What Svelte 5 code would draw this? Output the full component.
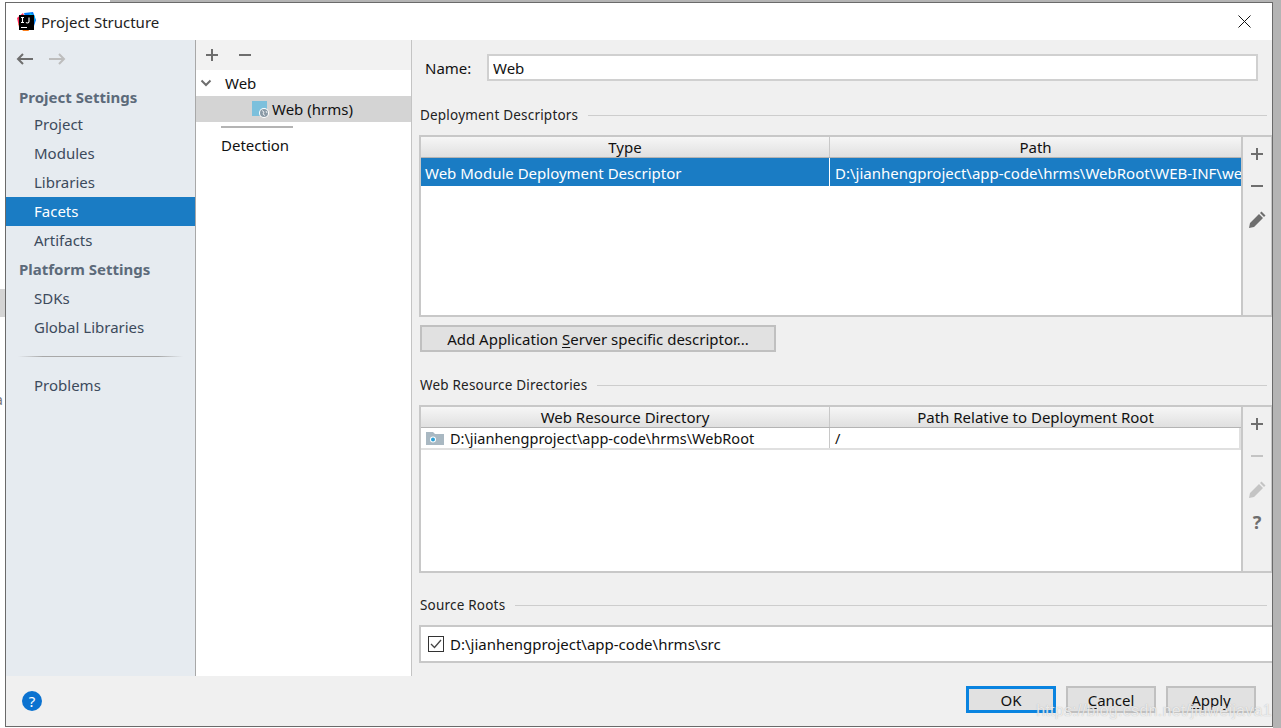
<script lang="ts">
  const settings = ["Project", "Modules", "Libraries", "Facets", "Artifacts"];
  const platform = ["SDKs", "Global Libraries"];
</script>

<div class="page">
  <div class="top-strip"><span class="strip-white"></span><span class="strip-gray"></span></div>
  <div class="middle">
    <div class="left-strip"><span class="peek"></span><span class="peek-char">a</span></div>
    <div class="window">
      <header class="titlebar">
        <svg class="logo" width="20" height="20" viewBox="0 0 20 20">
          <path d="M1 6 7 1 9 6 3 15Z" fill="#fe2857" />
          <path d="M8 1 17 0 20 8 17 17 11 12Z" fill="#087cfa" />
          <path d="M2 12 7 19 13 19 8 9Z" fill="#fc801d" />
          <path d="M14 1 19 4 18 11 12 6Z" fill="#07c3f2" />
          <rect x="3" y="3" width="15" height="15" fill="#000" />
          <rect x="5" y="15" width="6" height="1" fill="#fff" />
          <path d="M5 5.5h3M6.5 5.5v5M5 10.5h3M13 5.500v4c0 1-.8 1.500-1.600 1.500-.6 0-1.100-.3-1.400-.8" stroke="#fff" stroke-width="1.100" fill="none" />
        </svg>
        <span class="title">Project Structure</span>
        <svg class="close" width="13" height="13" viewBox="0 0 13 13">
          <path d="M.5.5l12 12M12.500.5l-12 12" stroke="#111" stroke-width="1" />
        </svg>
      </header>

      <div class="body">
        <aside class="sidebar">
          <div class="history">
            <svg width="18" height="12" viewBox="0 0 18 12"><path d="M17 6H2M7 1 2 6l5 5" stroke="#6e6e6e" stroke-width="2" fill="none" /></svg>
            <svg width="18" height="12" viewBox="0 0 18 12"><path d="M1 6h15M11 1l5 5-5 5" stroke="#bdbdbd" stroke-width="2" fill="none" /></svg>
          </div>
          <div class="group first">Project Settings</div>
          {#each settings as item}
            <div class="item" class:selected={item === "Facets"}>{item}</div>
          {/each}
          <div class="group">Platform Settings</div>
          {#each platform as item}
            <div class="item">{item}</div>
          {/each}
          <div class="side-sep"></div>
          <div class="item">Problems</div>
        </aside>

        <section class="tree">
          <div class="tree-tools">
            <svg width="14" height="14" viewBox="0 0 14 14"><path d="M7 1v12M1 7h12" stroke="#6e6e6e" stroke-width="2" /></svg>
            <svg width="14" height="14" viewBox="0 0 14 14"><path d="M1 7h12" stroke="#6e6e6e" stroke-width="2" /></svg>
          </div>
          <div class="tree-row">
            <svg class="chevron" width="12" height="8" viewBox="0 0 12 8"><path d="M1.500 1.500 6 6l4.500-4.500" stroke="#6e6e6e" stroke-width="2" fill="none" /></svg>
            <span>Web</span>
          </div>
          <div class="tree-row child">
            <svg width="20" height="20" viewBox="0 0 20 20">
              <rect x="1" y="2" width="15" height="15" fill="#7cc0dc" />
              <circle cx="13" cy="14" r="5" fill="#fff" />
              <circle cx="13" cy="14" r="4" fill="#8a9aa6" />
              <path d="M11 11.500l2 1.500-1 2 2 1.500M15 12l1 2" stroke="#fff" stroke-width=".8" fill="none" />
            </svg>
            <span>Web (hrms)</span>
          </div>
          <div class="tree-sep"></div>
          <div class="detection">Detection</div>
        </section>

        <main class="panel">
          <div class="name-row">
            <label for="name">Name:</label>
            <input id="name" value="Web" />
          </div>

          <div class="legend l-deploy"><span>Deployment Descriptors</span><i></i></div>
          <div class="table-wrap t-deploy">
            <div class="table">
              <div class="thead"><div class="c1">Type</div><div class="c2">Path</div></div>
              <div class="tr sel">
                <div class="c1">Web Module Deployment Descriptor</div>
                <div class="c2 clip">D:\jianhengproject\app-code\hrms\WebRoot\WEB-INF\web.xml</div>
              </div>
            </div>
            <div class="tools">
              <svg width="14" height="14" viewBox="0 0 14 14"><path d="M7 1v12M1 7h12" stroke="#6e6e6e" stroke-width="2" /></svg>
              <svg width="14" height="14" viewBox="0 0 14 14"><path d="M1 7h12" stroke="#6e6e6e" stroke-width="2" /></svg>
              <svg width="18" height="18" viewBox="0 0 18 18"><path d="M1 17l1-5L11 3l4 4-9 9ZM12 2l1.500-1.500 4 4L16 6Z" fill="#6e6e6e" /></svg>
            </div>
          </div>
          <button class="add-btn">Add Application <u>S</u>erver specific descriptor...</button>

          <div class="legend l-web"><span>Web Resource Directories</span><i></i></div>
          <div class="table-wrap t-web">
            <div class="table">
              <div class="thead"><div class="c1">Web Resource Directory</div><div class="c2">Path Relative to Deployment Root</div></div>
              <div class="tr plain">
                <div class="c1 dir">
                  <svg width="18" height="14" viewBox="0 0 18 14">
                    <path d="M0 1h7l2 2h9v11H0Z" fill="#a9b8c2" />
                    <circle cx="7" cy="8.500" r="3" fill="#fff" />
                    <circle cx="7" cy="8.500" r="2" fill="#2a9fd6" />
                  </svg>
                  <span>D:\jianhengproject\app-code\hrms\WebRoot</span>
                </div>
                <div class="c2 slash">/</div>
              </div>
            </div>
            <div class="tools">
              <svg width="14" height="14" viewBox="0 0 14 14"><path d="M7 1v12M1 7h12" stroke="#6e6e6e" stroke-width="2" /></svg>
              <svg width="14" height="14" viewBox="0 0 14 14"><path d="M1 7h12" stroke="#c4c4c4" stroke-width="2" /></svg>
              <svg width="18" height="18" viewBox="0 0 18 18"><path d="M1 17l1-5L11 3l4 4-9 9ZM12 2l1.500-1.500 4 4L16 6Z" fill="#c4c4c4" /></svg>
              <span class="q">?</span>
            </div>
          </div>

          <div class="legend l-src"><span>Source Roots</span><i></i></div>
          <div class="roots">
            <svg width="16" height="16" viewBox="0 0 16 16">
              <rect x=".5" y=".5" width="15" height="15" fill="#fff" stroke="#333" />
              <path d="M3 8l3.500 3.500L13 4" stroke="#444" stroke-width="1.300" fill="none" />
            </svg>
            <span>D:\jianhengproject\app-code\hrms\src</span>
          </div>
        </main>
      </div>

      <footer class="footer">
        <svg class="help" width="20" height="20" viewBox="0 0 20 20">
          <circle cx="10" cy="10" r="10" fill="#0b72d0" />
          <text x="10" y="15.500" text-anchor="middle" font-size="15" fill="#fff" font-family="Noto Sans, sans-serif">?</text>
        </svg>
        <div class="actions">
          <button class="default">OK</button>
          <button><u>C</u>ancel</button>
          <button><u>A</u>pply</button>
        </div>
      </footer>
      <span class="watermark">https://blog.csdn.net/jiuweijava1</span>
    </div>
    <div class="right-strip"></div>
  </div>
</div>

<style>
  :global(body) {
    margin: 0;
    background: #fff;
  }
  .page {
    width: 1281px;
    height: 728px;
    overflow: hidden;
    font-family: "Noto Sans", sans-serif;
    font-size: 15px;
    color: #111;
  }
  .top-strip {
    display: flex;
    height: 2px;
  }
  .strip-white {
    width: 110px;
  }
  .strip-gray {
    flex: 1;
    background: #b4b4b4;
  }
  .middle {
    display: flex;
    height: 726px;
  }
  .left-strip {
    width: 5px;
    display: flex;
    flex-direction: column;
    overflow: hidden;
  }
  .peek {
    margin-top: 287px;
    height: 28px;
    background: #d4d4d4;
  }
  .peek-char {
    margin: 74px 0 0 -5px;
    font-size: 14px;
    line-height: 18px;
    color: #777;
  }
  .right-strip {
    flex: 1;
    background: #b4b4b4;
  }
  .window {
    position: relative;
    width: 1268px;
    height: 725px;
    box-sizing: border-box;
    border: 1px solid #6a6a6a;
    display: flex;
    flex-direction: column;
    background: #f0f0f0;
  }
  .titlebar {
    height: 37px;
    flex: none;
    background: #fff;
    display: flex;
    align-items: center;
    padding: 0 21px 0 10px;
  }
  .logo {
    margin-right: 5px;
  }
  .title {
    flex: 1;
    color: #222;
  }
  .body {
    flex: none;
    height: 636px;
    display: flex;
  }
  .sidebar {
    width: 190px;
    flex: none;
    box-sizing: border-box;
    background: #e6ebf0;
    border-right: 1px solid #a8a8a8;
    color: #3c4a5c;
  }
  .history {
    height: 37px;
    display: flex;
    align-items: center;
    gap: 14px;
    padding-left: 10px;
  }
  .group {
    height: 29px;
    line-height: 29px;
    padding-left: 13px;
    font-weight: 700;
    color: #5c6a7a;
  }
  .group.first {
    height: 20px;
    line-height: 20px;
    margin-top: 10px;
    margin-bottom: 3px;
  }
  .item {
    height: 29px;
    line-height: 29px;
    padding-left: 28px;
  }
  .item.selected {
    background: #1a7cc4;
    color: #fff;
  }
  .side-sep {
    height: 1px;
    margin: 14px 12px 14px 12px;
    background: linear-gradient(90deg, #e6ebf0, #a8a8a8 15%, #a8a8a8 85%, #e6ebf0);
  }
  .tree {
    width: 216px;
    flex: none;
    box-sizing: border-box;
    background: #fff;
    border-right: 1px solid #c4c4c4;
  }
  .tree-tools {
    height: 30px;
    background: #f2f2f2;
    display: flex;
    align-items: center;
    gap: 19px;
    padding: 0 0 0 9px;
  }
  .tree-row {
    height: 26px;
    display: flex;
    align-items: center;
  }
  .chevron {
    margin: 0 13px 0 4px;
  }
  .tree-row.child {
    background: #d4d4d4;
    padding-left: 55px;
    gap: 1px;
  }
  .tree-sep {
    width: 72px;
    height: 2px;
    margin: 4px 0 0 25px;
    background: #b4b4b4;
  }
  .detection {
    margin: 3px 0 0 25px;
    line-height: 28px;
  }
  .panel {
    flex: 1;
    padding-left: 7px;
    background: #f0f0f0;
    min-width: 0;
  }
  .name-row {
    height: 27px;
    margin-top: 14px;
    display: flex;
    align-items: center;
    padding-left: 6px;
  }
  .name-row label {
    width: 62px;
  }
  .name-row input {
    width: 771px;
    height: 27px;
    box-sizing: border-box;
    border: 2px solid #d0d0d0;
    padding: 0 4px;
    font: inherit;
    color: #111;
    background: #fff;
  }
  .legend {
    display: flex;
    align-items: center;
    gap: 10px;
    height: 20px;
    font-size: 13.500px;
    letter-spacing: 0.2px;
    padding-left: 1px;
    color: #222;
  }
  .legend i {
    flex: 1;
    height: 1px;
    background: #cdcdcd;
    margin-right: 5px;
  }
  .l-deploy {
    margin-top: 24px;
  }
  .l-web {
    margin-top: 23px;
  }
  .l-src {
    margin-top: 22px;
  }
  .table-wrap {
    display: flex;
    width: 853px;
    box-sizing: border-box;
    border: 2px solid #c8c8c8;
    border-right-width: 1px;
  }
  .t-deploy {
    margin-top: 10px;
    height: 182px;
  }
  .t-web {
    margin-top: 10px;
    height: 168px;
  }
  .table {
    width: 820px;
    flex: none;
    background: #fff;
    overflow: hidden;
  }
  .thead {
    height: 20px;
    display: flex;
    background: linear-gradient(#f6f6f6, #e0e0e0);
    border-bottom: 1px solid #b4b4b4;
    text-align: center;
    line-height: 21px;
    color: #111;
  }
  .c1 {
    width: 409px;
    flex: none;
    box-sizing: border-box;
    border-right: 1px solid #c8c8c8;
  }
  .c2 {
    flex: 1;
    min-width: 0;
  }
  .tr {
    display: flex;
  }
  .tr.sel {
    height: 28px;
    line-height: 30px;
    background: #1a7cc4;
    color: #fff;
  }
  .tr.sel .c1 {
    padding-left: 4px;
    border-right-color: #fff;
  }
  .clip {
    padding-left: 5px;
    white-space: nowrap;
    overflow: hidden;
  }
  .tr.plain {
    height: 20px;
    line-height: 20px;
    border-bottom: 2px solid #e0e0e0;
    border-right: 2px solid #e0e0e0;
    font-size: 14.500px;
  }
  .dir {
    display: flex;
    align-items: center;
    gap: 6px;
    padding-left: 5px;
  }
  .slash {
    padding-left: 5px;
  }
  .tools {
    flex: 1;
    border-left: 2px solid #c8c8c8;
    background: #f0f0f0;
    display: flex;
    flex-direction: column;
    align-items: center;
    gap: 18px;
    padding-top: 10px;
  }
  .tools .q {
    margin-top: -6px;
    font-size: 18px;
    font-weight: 700;
    line-height: 22px;
    color: #6e6e6e;
  }
  button {
    font: inherit;
    color: #111;
    background: #e1e1e1;
    border: 2px solid #c0c0c0;
    box-sizing: border-box;
    padding: 0;
  }
  .add-btn {
    display: block;
    width: 356px;
    height: 27px;
    margin: 8px 0 0 1px;
  }
  u {
    text-underline-offset: 2px;
  }
  .roots {
    width: 853px;
    height: 38px;
    margin-top: 10px;
    box-sizing: border-box;
    border: 2px solid #c8c8c8;
    border-right: 0;
    background: #fff;
    display: flex;
    align-items: center;
    gap: 6px;
    padding-left: 7px;
  }
  .footer {
    flex: 1;
    display: flex;
    align-items: center;
    justify-content: space-between;
    padding: 0 16px 0 16px;
  }
  .actions {
    display: flex;
    gap: 10px;
    margin-top: -3px;
  }
  .actions button {
    width: 90px;
    height: 27px;
  }
  .actions .default {
    border: 3px solid #0a84e0;
  }
  .watermark {
    position: absolute;
    right: 0;
    bottom: 6px;
    font-family: "Liberation Sans", sans-serif;
    font-size: 16px;
    letter-spacing: 0.3px;
    color: rgba(255, 255, 255, 0.72);
    text-shadow: 0 0 1px rgba(150, 150, 150, 0.7);
  }
</style>
